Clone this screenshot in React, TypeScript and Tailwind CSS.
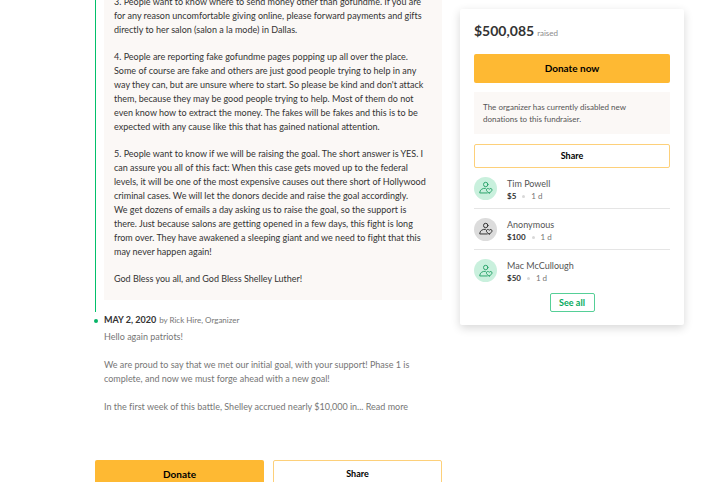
const donors = [
  { name: "Tim Powell", amount: "$5", tone: "bg-[#c9f0dd] text-[#2da46c]" },
  { name: "Anonymous", amount: "$100", tone: "bg-[#dcdcdc] text-[#333333]" },
  { name: "Mac McCullough", amount: "$50", tone: "bg-[#c9f0dd] text-[#2da46c]" },
];

function DonorIcon() {
  return (
    <svg viewBox="0 0 24 24" className="size-3.5" fill="none" stroke="currentColor" strokeWidth="1.7" strokeLinecap="round" strokeLinejoin="round" aria-hidden="true">
      <circle cx="11.500" cy="6" r="3.800" />
      <path d="M11 12.500C5.500 12 1.500 15 1.200 20.500h13" />
      <path d="M17.500 20.500c-3-1.600-4.800-3.300-4.800-5.300 0-2.800 3.600-3.200 4.800-.9 1.200-2.300 4.800-1.900 4.800.9 0 2-1.800 3.700-4.800 5.300z" />
    </svg>
  );
}

export default function App() {
  return (
    <div className="flex h-screen items-start gap-[18px] overflow-hidden bg-white pr-9 pl-[95px] font-['Lato',sans-serif] text-[#333333] [font-variant-ligatures:none]">
      <main className="min-w-0 flex-1">
        <article className="-mt-2 flex gap-2">
          <span className="w-px shrink-0 bg-[#02c06a]" />
          <div className="mb-3 min-w-0 flex-1 space-y-[13px] bg-[#fbf8f6] pt-[3px] pr-3 pb-3.5 pl-[10px] text-[9px] leading-[14px]">
            <p>3. People want to know where to send money other than gofundme. If you are for any reason uncomfortable giving online, please forward payments and gifts directly to her salon (salon a la mode) in Dallas.</p>
            <p>4. People are reporting fake gofundme pages popping up all over the place. Some of course are fake and others are just good people trying to help in any way they can, but are unsure where to start. So please be kind and don't attack them, because they may be good people trying to help. Most of them do not even know how to extract the money. The fakes will be fakes and this is to be expected with any cause like this that has gained national attention.</p>
            <p>5. People want to know if we will be raising the goal. The short answer is YES. I can assure you all of this fact: When this case gets moved up to the federal levels, it will be one of the most expensive causes out there short of Hollywood criminal cases. We will let the donors decide and raise the goal accordingly. We&nbsp;get dozens of emails a day asking us to raise the goal, so the support is there.&nbsp;Just because salons are getting opened in a few days, this fight is long from&nbsp;over. They have awakened a sleeping giant and we need to fight that this may&nbsp;never happen again!</p>
            <p>God Bless you all, and God Bless Shelley Luther!</p>
          </div>
        </article>

        <article className="relative pl-[9px] text-[#767676]">
          <span className="absolute top-[7px] -left-px size-1 rounded-full bg-[#06b467]" />
          <header className="flex items-baseline gap-[3px] text-[8px] leading-4">
            <h2 className="text-[9px] font-bold text-[#333333]">MAY 2, 2020</h2>
            <span>by Rick Hire, Organizer</span>
          </header>
          <div className="space-y-3.5 pt-0.5 text-[9px] leading-[14px]">
            <p>Hello again patriots!</p>
            <p>We are proud to say that we met our initial goal, with your support! Phase 1 is complete, and now we must forge ahead with a new goal!</p>
            <p>In the first week of this battle, Shelley accrued nearly $10,000 in... <a href="#update">Read more</a></p>
          </div>
        </article>

        <div className="mt-[46px] grid grid-cols-2 gap-[9px] text-black">
          <button className="h-7 rounded-xs bg-[#feb933] text-[10px] font-bold">Donate</button>
          <button className="h-7 rounded-xs border border-[#fdd07a] text-[9px] font-bold">Share</button>
        </div>
      </main>

      <aside className="mt-[9px] w-56 shrink-0 rounded-xs bg-white px-3.5 pt-3 pb-[13px] shadow-[0_3px_10px_rgba(0,0,0,0.16)]">
        <h2 className="flex items-baseline gap-[3px] text-sm leading-5 font-bold">
          $500,085 <span className="text-[8px] font-normal text-[#8c8c8c]">raised</span>
        </h2>
        <button className="mt-[11px] h-[29px] w-full rounded-xs bg-[#feb933] text-[10px] font-bold text-black">Donate now</button>
        <p className="mt-[9px] bg-[#fbf8f6] px-[9px] py-[9px] text-[8px] leading-3 text-[#555555]">The organizer has currently disabled new donations to this fundraiser.</p>
        <button className="mt-[10px] h-6 w-full rounded-xs border border-[#fdd07a] text-[9px] font-bold text-black">Share</button>
        <ul className="divide-y divide-[#e5e5e5]">
          {donors.map((d) => (
            <li key={d.name} className="flex h-[41px] items-center gap-[10px]">
              <span className={`flex size-[23px] items-center justify-center rounded-full ${d.tone}`}>
                <DonorIcon />
              </span>
              <div className="pt-[3px]">
                <p className="text-[9px] leading-[13px] text-[#555555]">{d.name}</p>
                <p className="flex items-center gap-[6px] text-[8px] leading-[13px] text-[#767676]">
                  <b className="text-[#333333]">{d.amount}</b>
                  <span className="size-[3px] rounded-full bg-[#d8d8d8]" />
                  <span>1 d</span>
                </p>
              </div>
            </li>
          ))}
        </ul>
        <button className="mx-auto mt-0.5 block h-[19px] w-[45px] rounded-xs border border-[#55cf97] text-[9px] font-bold text-[#02a95c]">See all</button>
      </aside>
    </div>
  );
}
